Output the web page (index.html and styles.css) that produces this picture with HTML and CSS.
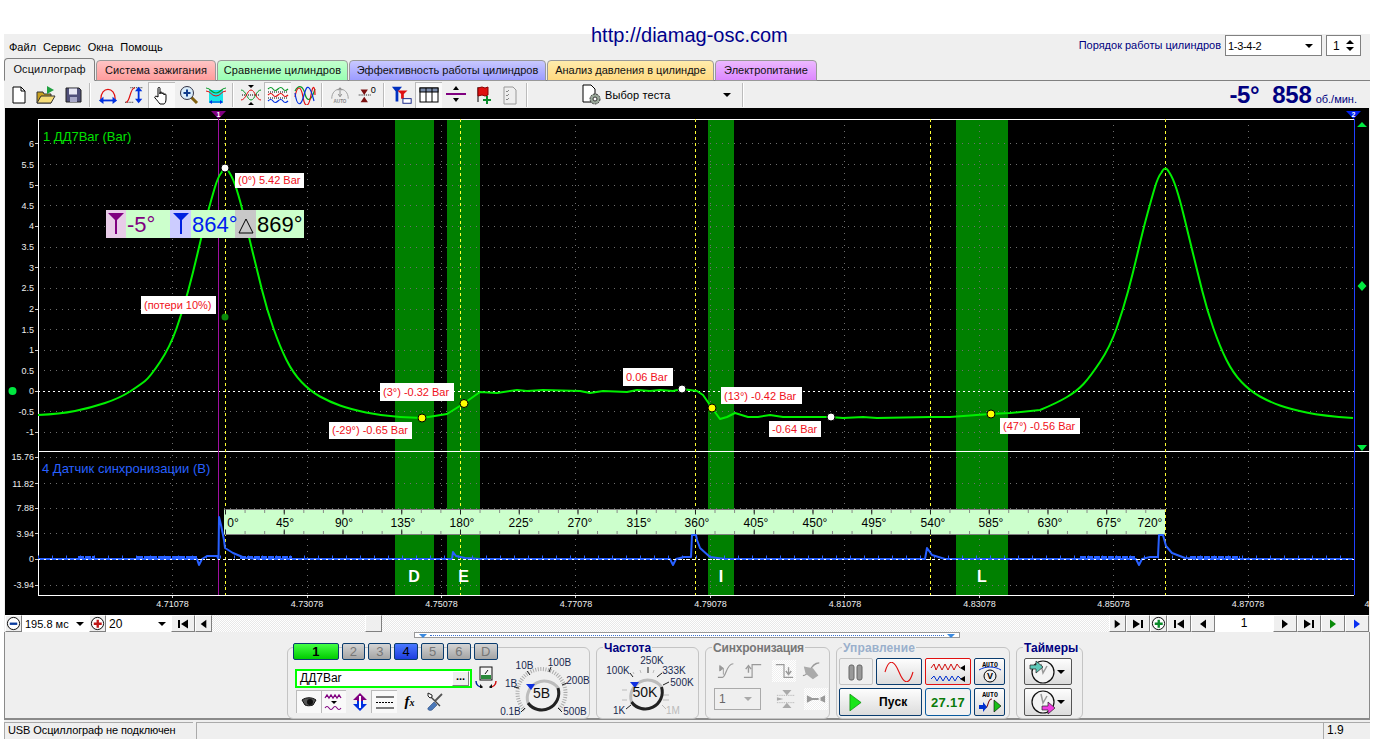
FILE: index.html
```html
<!DOCTYPE html>
<html lang="ru">
<head>
<meta charset="utf-8">
<title>Осциллограф</title>
<link rel="stylesheet" href="styles.css">
</head>
<body>
<svg class="defs" width="0" height="0" aria-hidden="true">
  <symbol id="first" viewBox="0 0 16 12"><path d="M3 2h2v8H3zM13 1.500v9L6 6z"/></symbol>
  <symbol id="prev" viewBox="0 0 16 12"><path d="M11 1.500v9L5 6z"/></symbol>
  <symbol id="next" viewBox="0 0 16 12"><path d="M5 1.500v9L11 6z"/></symbol>
  <symbol id="last" viewBox="0 0 16 12"><path d="M11 2h2v8h-2zM3 1.500v9L10 6z"/></symbol>
  <symbol id="minus" viewBox="0 0 16 16"><circle cx="8" cy="8" r="6.500" fill="#fff" stroke="#000"/><rect x="4" y="7" width="8" height="2.500" fill="#0a3c9e"/></symbol>
  <symbol id="plus" viewBox="0 0 16 16"><circle cx="8" cy="8" r="6.500" fill="#fff" stroke="#000"/><path d="M4 7h3V4h2.500v3h3v2.500h-3v3H7v-3H4z" fill="#c01818"/></symbol>
  <symbol id="plusg" viewBox="0 0 16 16"><circle cx="8" cy="8" r="6.500" fill="#fff" stroke="#000"/><path d="M4 7h3V4h2.500v3h3v2.500h-3v3H7v-3H4z" fill="#0a8a2a"/></symbol>
  <symbol id="clock" viewBox="0 0 26 26"><circle cx="13" cy="13" r="11" fill="#f4f4f4" stroke="#111" stroke-width="1.200"/><path d="M11 5l2 9 4-7" fill="none" stroke="#999" stroke-width="1.500"/></symbol>
</svg>

<div class="url">http://diamag-osc.com</div>

<div class="app">
  <div class="topbar">
    <nav class="menu"><span>Файл</span><span>Сервис</span><span>Окна</span><span>Помощь</span></nav>
    <div class="order">
      <span class="order-label">Порядок работы цилиндров</span>
      <div class="combo order-combo"><span>1-3-4-2</span><i class="caret"></i></div>
      <div class="combo spin"><span>1</span><b class="spin-arrows"><i class="up"></i><i class="caret"></i></b></div>
    </div>
  </div>

  <div class="tabs">
    <div class="tab active w1">Осциллограф</div>
    <div class="tab pink w2">Система зажигания</div>
    <div class="tab green w3">Сравнение цилиндров</div>
    <div class="tab blue w4">Эффективность работы цилиндров</div>
    <div class="tab yellow w5">Анализ давления в цилиндре</div>
    <div class="tab violet w6">Электропитание</div>
  </div>

  <div class="toolbar">
    <div class="tb"><svg class="ico" viewBox="0 0 20 20"><path d="M4 2h8l4 4v12H4z" fill="#fff" stroke="#000"/><path d="M12 2v4h4" fill="none" stroke="#000"/></svg></div>
    <div class="tb"><svg class="ico" viewBox="0 0 20 20"><path d="M1 7h6l1 2h7v9H1z" fill="#c8a020" stroke="#333"/><path d="M1 18l4-7h14l-4 7z" fill="#f6dc78" stroke="#333"/><path d="M11 1l7 4-7 4z" fill="#20a040"/></svg></div>
    <div class="tb"><svg class="ico" viewBox="0 0 20 20"><path d="M3 3h13l2 2v12H3z" fill="#50507a" stroke="#222"/><rect x="6" y="3.500" width="8" height="6" fill="#e8e8f4"/><rect x="7" y="12" width="7" height="5" fill="#a8a8c8"/></svg></div>
    <i class="sep"></i>
    <div class="tb"><svg class="ico" viewBox="0 0 22 20"><path d="M3 15C3 0 19 0 19 15" fill="none" stroke="#e01010" stroke-width="1.300"/><path d="M3 16h16" stroke="#0030e0" stroke-width="2"/><path d="M1 16l5-4v8zM21 16l-5-4v8z" fill="#0030e0"/></svg></div>
    <div class="tb"><svg class="ico" viewBox="0 0 22 20"><path d="M6 2h14M0 18h10" stroke="#000" stroke-dasharray="1 1"/><path d="M1 18C6 18 5 2 11 2" fill="none" stroke="#e01010" stroke-width="1.300"/><path d="M15 4v12" stroke="#0030e0" stroke-width="2"/><path d="M15 1l-4 5h8zM15 19l-4-5h8z" fill="#0030e0"/></svg></div>
    <div class="tb pressed"><svg class="ico" viewBox="0 0 20 20"><path d="M6 11V3.500c0-1.500 2-1.500 2 0V9V8c0-1.500 2-1.500 2 0v1c0-1.500 2-1.500 2 0v1c0-1.500 2-1.500 2 0v4c0 3-1 4.500-2 5H8c-1-1-3-4-5-6-1-1.500 1-2.500 3-1z" fill="#fff" stroke="#000"/></svg></div>
    <div class="tb"><svg class="ico" viewBox="0 0 20 20"><path d="M12 12l6 6" stroke="#806010" stroke-width="3"/><circle cx="8" cy="8" r="6.500" fill="#d8ecfa" stroke="#334"/><path d="M4.500 7h2.500V4.500h2V7h2.500v2H9v2.500H7V9H4.500z" fill="#103c8c"/></svg></div>
    <div class="tb"><svg class="ico wide" viewBox="0 0 22 20"><rect x="4" y="5" width="14" height="13" fill="#19e6e6"/><path d="M1 3c5 0 5 5 10 5s5-5 10-5" fill="none" stroke="#0a9a2a" stroke-width="1.200"/><path d="M1 6c5 0 5 5 10 5s5-5 10-5" fill="none" stroke="#e01010"/><path d="M6 17h10" stroke="#0030e0"/><path d="M4 17l3-2v4zM18 17l-3-2v4z" fill="#0030e0"/></svg></div>
    <i class="sep"></i>
    <div class="tb"><svg class="ico wide" viewBox="0 0 22 20"><path d="M2 10h18" stroke="#000" stroke-dasharray="1 1"/><path d="M1 5c5 0 6 10 10 10s5-10 10-10" fill="none" stroke="#0a9a2a"/><path d="M1 15c5 0 6-10 10-10s5 10 10 10" fill="none" stroke="#e01010"/><path d="M8 0h6l-3 3zM8 20h6l-3-3z"/></svg></div>
    <div class="tb pressed"><svg class="ico wide" viewBox="0 0 22 20"><path d="M1 4q3-3 5 0t5 0 5 0 5 0" fill="none" stroke="#0a9a2a" stroke-width="1.200"/><path d="M1 10q3-3 5 0t5 0 5 0 5 0" fill="none" stroke="#e01010" stroke-width="1.200"/><path d="M1 16q3-3 5 0t5 0 5 0 5 0" fill="none" stroke="#0030e0" stroke-width="1.200"/><path d="M1 7h20M1 13h20" stroke="#000" stroke-dasharray="1 1"/></svg></div>
    <div class="tb"><svg class="ico wide" viewBox="0 0 22 20"><path d="M1 6c4-7 8-5 10 3s6 8 10-5" fill="none" stroke="#0a9a2a" stroke-width="1.200"/><path d="M1 12c2-12 6-12 8 0s6 10 8-2 4-8 4 0" fill="none" stroke="#e01010" stroke-width="1.200"/><path d="M1 8c2 14 6 14 9 2s6-10 10 6" fill="none" stroke="#0030e0" stroke-width="1.200"/></svg></div>
    <i class="sep"></i>
    <div class="tb"><svg class="ico wide" viewBox="0 0 24 20"><path d="M3 14C3 0 21 0 21 14" fill="#eee" stroke="#999"/><path d="M12 3v8M10 5l2-3 2 3M10 9l2 3 2-3" fill="none" stroke="#888"/><text x="12" y="19" class="auto-tiny">AUTO</text></svg></div>
    <div class="tb"><svg class="ico wide" viewBox="0 0 24 20"><path d="M3 10h14" stroke="#000" stroke-dasharray="1 1"/><path d="M5 3h8l-4 6zM5 17h8l-4-6z" fill="#7a1010" transform="translate(0 1)"/><text x="16" y="8" class="zero">0</text></svg></div>
    <i class="sep"></i>
    <div class="tb"><svg class="ico wide" viewBox="0 0 24 20"><path d="M1 1h11L8 6v11H5V6z" fill="#0030c0"/><path d="M7 5h11l-4 4v5h-3V9z" fill="#e01010"/><rect x="13" y="14" width="9" height="5" fill="#fff" stroke="#0a1a80"/></svg></div>
    <div class="tb pressed"><svg class="ico wide" viewBox="0 0 22 20"><rect x="2" y="3" width="18" height="14" fill="#fff" stroke="#000"/><rect x="2" y="3" width="18" height="4" fill="#7a8aa8" stroke="#000"/><path d="M8 3v14M14 3v14" stroke="#000"/></svg></div>
    <div class="tb"><svg class="ico wide" viewBox="0 0 22 20"><path d="M1 9h20" stroke="#800080" stroke-width="2"/><path d="M8 5l3-4 3 4zM8 13l3 4 3-4z"/></svg></div>
    <div class="tb"><svg class="ico" viewBox="0 0 20 20"><path d="M5 2v15" stroke="#000"/><path d="M5 3l4-1 3 1 3-1v8l-3 1-3-1-4 1z" fill="#e01010" stroke="#800"/><path d="M10 14h3v-3h2v3h3v2h-3v3h-2v-3h-3z" fill="#0a8a2a"/></svg></div>
    <div class="tb"><svg class="ico" viewBox="0 0 20 20"><path d="M4 2h9l3 3v14H4z" fill="#eee" stroke="#999"/><path d="M6 6l1 1 2-2M6 10l1 1 2-2M6 14l1 1 2-2" fill="none" stroke="#888"/></svg></div>
    <i class="sep"></i>
    <div class="test-select">
      <svg class="ico doc" viewBox="0 0 22 22"><path d="M2 1h8l4 4v13H2z" fill="#fff" stroke="#000"/><circle cx="14" cy="15" r="5" fill="#9aa89a" stroke="#333" stroke-dasharray="2 1"/><circle cx="14" cy="15" r="2" fill="#fff" stroke="#333"/></svg>
      <span>Выбор теста</span>
      <i class="caret"></i>
    </div>
    <i class="sep"></i>
    <div class="readout"><b class="big">-5°</b><b class="big rpm">858</b><span class="unit">об./мин.</span></div>
  </div>

  <svg class="scope" viewBox="5 108 1364 507" width="1364" height="507">
    <rect class="s-band" x="395" y="119" width="39" height="476"/>
    <rect class="s-band" x="447" y="119" width="33" height="476"/>
    <rect class="s-band" x="708" y="119" width="26" height="476"/>
    <rect class="s-band" x="956" y="119" width="52" height="476"/>

    <path class="s-grid" d="M38 143.500H1354M38 164.500H1354M38 185.500H1354M38 205.500H1354M38 226.500H1354M38 247.500H1354M38 267.500H1354M38 288.500H1354M38 309.500H1354M38 329.500H1354M38 350.500H1354M38 370.500H1354M38 411.500H1354M38 432.500H1354M38 457.500H1354M38 483.500H1354M38 508.500H1354M38 533.500H1354M38 585.500H1354"/>
    <path class="s-grid" d="M172.500 119V595M307.500 119V595M441.500 119V595M575.500 119V595M710.500 119V595M844.500 119V595M979.500 119V595M1113.500 119V595M1248.500 119V595"/>
    <path class="s-zero" d="M38 391.500H1354M38 559.500H1354"/>
    <path class="s-frame" d="M38.500 595.500V119.500H1354M38 451.500H1369M38 595.500H1354"/>
    <path class="s-tick" d="M35 143.500h3M35 185.500h3M35 226.500h3M35 267.500h3M35 309.500h3M35 350.500h3M35 391.500h3M35 432.500h3M35 457.500h3M35 483.500h3M35 508.500h3M35 533.500h3M35 559.500h3M35 585.500h3M172.500 596v2M307.500 596v2M441.500 596v2M575.500 596v2M710.500 596v2M844.500 596v2M979.500 596v2M1113.500 596v2M1248.500 596v2"/>

    <path class="s-yellow" d="M225.500 119V595M460.500 119V595M695.500 119V595M930.500 119V595M1165.500 119V595"/>
    <path class="s-purple" d="M218.500 119V595"/>
    <path class="s-blueline" d="M1354.500 119V595"/>
    <path class="s-m-purple" d="M211 111h15l-7.500 8z"/>
    <path class="s-m-blue" d="M1346 111h15l-7.500 8z"/>
    <text x="218.500" y="117" class="s-mtext">1</text>
    <text x="1353.500" y="117" class="s-mtext">2</text>

    <path class="s-ruler" d="M224 509H1165V535H224z"/>
    <path class="s-ruler-edge" d="M224 509.500H1165M224 534.500H1165"/>
    <path class="s-rt-minor" d="M225 511.500H1165M225 532.500H1165"/>
    <path class="s-rt-major" d="M225 512H1165M225 532H1165"/>
    <g class="s-rtext">
      <text x="233" y="527">0°</text><text x="285" y="527">45°</text><text x="344" y="527">90°</text><text x="403" y="527">135°</text><text x="462" y="527">180°</text><text x="521" y="527">225°</text><text x="580" y="527">270°</text><text x="639" y="527">315°</text><text x="697" y="527">360°</text><text x="756" y="527">405°</text><text x="815" y="527">450°</text><text x="874" y="527">495°</text><text x="933" y="527">540°</text><text x="991" y="527">585°</text><text x="1050" y="527">630°</text><text x="1109" y="527">675°</text><text x="1150" y="527">720°</text>
    </g>

    <path class="s-trace" d="M38 415Q60 414 75 411Q90 408 105 403Q120 398 130 391.500Q140 385 145 381Q150 377 160 362Q170 347 176.500 328.500Q183 310 188 291.500Q193 273 198 251.500Q203 230 207.500 213.500Q212 197 215 187Q218 177 221.500 172.500Q225 165 229 172Q233 178 236.500 189Q240 200 244 216.500Q248 233 252.500 251.500Q257 270 262 290Q267 310 273.500 328.500Q280 347 286.500 360Q293 373 301.500 382Q310 391 320 396.500Q330 402 340 405.500Q350 409 366 412.500Q383 416 400 417L422 418L447 414L463 404L480 392L497 393L517 390L527 391L543 390L580 391L590 393L603 391L627 392L637 390L650 391L660 390L673 391L682 389L697 391L703 395L712 408L720 419L727 417L735 413L748 417L758 417L770 415L783 417L810 417L830 417L843 418L863 417L877 418L930 417L950 417L990 414L1010 413L1040 410Q1057 403 1067 397Q1077 391 1083.500 384Q1090 377 1100 362Q1110 347 1116.500 328.500Q1123 310 1128 291.500Q1133 273 1138 251.500Q1143 230 1147.500 213.500Q1152 197 1155 187Q1158 177 1161.500 172.500Q1165 165 1169 172Q1173 178 1176.500 189Q1180 200 1184 216.500Q1188 233 1192.500 251.500Q1197 270 1202 290Q1207 310 1213.500 328.500Q1220 347 1226.500 360Q1233 373 1241.500 382Q1250 391 1260 396.500Q1270 402 1280 405.500Q1290 409 1306.500 412.500Q1323 416 1353 418"/>

    <path class="s-noise" d="M38 557H1354"/>
    <path class="s-noise-thick" d="M137 557.500H197M240 557.500H292M78 557.500H95M1080 557.500H1136M1190 557.500H1240"/>
    <polyline class="s-blue" points="38,559 197,559 199,565 202,559 207,556 217,556 218.500,559 219,517 221,525 224,540 225,548 233,553 245,558 260,559 452,559 453,552 456,556 465,558 480,559 670,559 673,565 676,559 684,557 691,557 692,535 696,535 697,540 700,548 710,557 725,559 925,559 927,548 932,555 945,559 1136,559 1139,565 1142,559 1150,557 1158,557 1159,535 1163,535 1166,546 1172,553 1185,558 1200,559 1353,559"/>
    <path class="s-zero2" d="M38 559.500H1354"/>

    <g class="s-ylabels">
      <text x="34" y="147">6</text><text x="34" y="188">5</text><text x="34" y="168">5.5</text><text x="34" y="209">4.5</text><text x="34" y="229">4</text><text x="34" y="250">3.5</text><text x="34" y="271">3</text><text x="34" y="291">2.5</text><text x="34" y="312">2</text><text x="34" y="333">1.5</text><text x="34" y="353">1</text><text x="34" y="374">0.5</text><text x="34" y="394">0</text><text x="34" y="415">-0.5</text><text x="34" y="435">-1</text>
      <text x="34" y="460">15.76</text><text x="34" y="487">11.82</text><text x="34" y="511">7.88</text><text x="34" y="537">3.94</text><text x="34" y="562">0</text><text x="34" y="588">-3.94</text>
    </g>
    <g class="s-xlabels">
      <text x="172.500" y="607">4.71078</text><text x="307" y="607">4.73078</text><text x="441.500" y="607">4.75078</text><text x="576" y="607">4.77078</text><text x="710.500" y="607">4.79078</text><text x="845" y="607">4.81078</text><text x="979.500" y="607">4.83078</text><text x="1113.500" y="607">4.85078</text><text x="1248" y="607">4.87078</text><text x="1367" y="607">4</text>
    </g>

    <text x="43" y="141" class="s-ch1">1 ДД7Bar (Bar)</text>
    <text x="42" y="473" class="s-ch4">4 Датчик синхронизации (В)</text>

    <g class="s-letters"><text x="414" y="582">D</text><text x="463.500" y="582">E</text><text x="721" y="582">I</text><text x="982" y="582">L</text></g>

    <rect class="s-lb" x="235" y="173" width="69" height="15"/><text class="s-lt" x="238" y="184">(0°) 5.42 Bar</text>
    <rect class="s-lb" x="141" y="296" width="75" height="18"/><text class="s-lt" x="144" y="309">(потери 10%)</text>
    <rect class="s-lb" x="380" y="383" width="74" height="18"/><text class="s-lt" x="383" y="396">(3°) -0.32 Bar</text>
    <rect class="s-lb" x="329" y="422" width="83" height="17"/><text class="s-lt" x="332" y="434">(-29°) -0.65 Bar</text>
    <rect class="s-lb" x="623" y="368" width="50" height="18"/><text class="s-lt" x="626" y="381">0.06 Bar</text>
    <rect class="s-lb" x="721" y="387" width="81" height="17"/><text class="s-lt" x="724" y="400">(13°) -0.42 Bar</text>
    <rect class="s-lb" x="769" y="421" width="52" height="16"/><text class="s-lt" x="772" y="433">-0.64 Bar</text>
    <rect class="s-lb" x="1000" y="418" width="80" height="16"/><text class="s-lt" x="1003" y="430">(47°) -0.56 Bar</text>

    <circle class="s-dw" cx="225" cy="168" r="4"/>
    <circle class="s-dg" cx="225" cy="317" r="3.500"/>
    <circle class="s-dy" cx="422" cy="418" r="4"/>
    <circle class="s-dy" cx="464" cy="403.500" r="4"/>
    <circle class="s-dy" cx="712" cy="408" r="4"/>
    <circle class="s-dy" cx="991" cy="414" r="4"/>
    <circle class="s-dw" cx="682" cy="389" r="4"/>
    <circle class="s-dw" cx="831" cy="417" r="4"/>

    <circle class="s-lime" cx="12.500" cy="391" r="4"/>
    <path class="s-lime" d="M1357 127l5-5 5 5zM1362 281l4.500 5-4.500 5-4.500-5zM1357 445h10l-5 6z"/>

    <rect class="s-box" x="106" y="210" width="198" height="28"/>
    <rect class="s-box-p" x="106" y="210" width="20" height="28"/>
    <rect class="s-box-b" x="170" y="210" width="21" height="28"/>
    <rect class="s-box-g" x="235" y="210" width="21" height="28"/>
    <path class="s-fil-p" d="M108 213h16l-7 7v14h-2v-14z"/>
    <path class="s-fil-b" d="M173 213h16l-7 7v14h-2v-14z"/>
    <path class="s-delta" d="M246 219l7 14h-14z"/>
    <text class="s-m s-m1" x="127" y="232">-5°</text>
    <text class="s-m s-m2" x="192" y="232">864°</text>
    <text class="s-m s-m3" x="257" y="232">869°</text>
  </svg>

  <div class="scrollrow">
    <div class="zbtn"><svg class="nav-ico" viewBox="0 0 16 16"><use href="#minus"/></svg></div>
    <div class="sel sel1"><span>195.8 мс</span><i class="caret"></i></div>
    <div class="zbtn"><svg class="nav-ico" viewBox="0 0 16 16"><use href="#plus"/></svg></div>
    <div class="sel sel2"><span>20</span><i class="caret"></i></div>
    <div class="nbtn"><svg class="nav-tri" viewBox="0 0 16 12"><use href="#first"/></svg></div>
    <div class="nbtn n-s"><svg class="nav-tri" viewBox="0 0 16 12"><use href="#prev"/></svg></div>
    <div class="track"><div class="thumb"></div></div>
    <div class="nbtn n-s"><svg class="nav-tri" viewBox="0 0 16 12"><use href="#next"/></svg></div>
    <div class="nbtn"><svg class="nav-tri" viewBox="0 0 16 12"><use href="#last"/></svg></div>
    <div class="zbtn"><svg class="nav-ico" viewBox="0 0 16 16"><use href="#plusg"/></svg></div>
    <div class="nbtn"><svg class="nav-tri" viewBox="0 0 16 12"><use href="#first"/></svg></div>
    <div class="nbtn"><svg class="nav-tri" viewBox="0 0 16 12"><use href="#prev"/></svg></div>
    <div class="pageno">1</div>
    <div class="nbtn"><svg class="nav-tri" viewBox="0 0 16 12"><use href="#next"/></svg></div>
    <div class="nbtn"><svg class="nav-tri" viewBox="0 0 16 12"><use href="#last"/></svg></div>
    <div class="nbtn c-green"><svg class="nav-tri" viewBox="0 0 16 12"><use href="#next"/></svg></div>
    <div class="nbtn c-blue"><svg class="nav-tri" viewBox="0 0 16 12"><use href="#next"/></svg></div>
  </div>

  <div class="bottom">
    <div class="slim"><i class="slim-tri"></i><i class="slim-dots"></i><i class="slim-tri"></i></div>
    <div class="groups">
      <section class="group g-channel">
        <div class="ch-left">
          <div class="chan-row">
            <span class="chan c-on w-first">1</span><span class="chan">2</span><span class="chan">3</span><span class="chan c-4">4</span><span class="chan">5</span><span class="chan">6</span><span class="chan c-d">D</span>
          </div>
          <div class="name-row">
            <div class="name-input"><span>ДД7Bar</span><b class="dots">...</b></div>
            <svg class="ico probe" viewBox="0 0 22 22"><rect x="5" y="1" width="12" height="13" fill="#f4f4f4" stroke="#111"/><rect x="6" y="9" width="10" height="4" fill="#2a8a3a"/><path d="M10 8l3-4" stroke="#111"/><path d="M1 15c0 4 3 6 6 6" fill="none" stroke="#0020a0" stroke-width="1.500"/><path d="M21 15c0 4-3 6-6 6" fill="none" stroke="#d01010" stroke-width="1.500"/><path d="M5 18v6l3-3zM17 18v6l-3-3z" fill="#111"/></svg>
          </div>
          <div class="chicons">
            <div class="ci pressed"><svg class="ico" viewBox="0 0 20 20"><path d="M3 8c4-3 10-3 14 0l-3 5c-3 1-6 1-8 0z" fill="#555" stroke="#111"/><circle cx="11" cy="10" r="3" fill="#111"/></svg></div>
            <div class="ci pressed"><svg class="ico" viewBox="0 0 20 20"><path d="M1 6l2-3 2 3 2-3 2 3 2-3 2 3 2-3 2 3" fill="none" stroke="#800080" stroke-width="1.300"/><path d="M7 9h6l-3 3z"/><path d="M1 16q2-3 4 0t4 0 4 0 4 0" fill="none" stroke="#800080" stroke-width="1.100"/></svg></div>
            <div class="ci c-narrow"><svg class="ico" viewBox="0 0 20 20"><path d="M10 1l7 7h-4v3H7V8H3z" fill="#800080"/><path d="M10 19l7-7h-4V9H7v3H3z" fill="#0030e0"/><path d="M9 4h2v12H9z" fill="#fff"/></svg></div>
            <div class="ci pressed c-lines"><svg class="ico" viewBox="0 0 20 20"><path d="M1 5h18M1 16h18" stroke="#000"/><path d="M1 10.500h18" stroke="#000" stroke-dasharray="2 1"/></svg></div>
            <div class="ci c-fx"><span class="fx">f<small>x</small></span></div>
            <div class="ci"><svg class="ico" viewBox="0 0 20 20"><path d="M4 2l2 3 9 9" fill="none" stroke="#444" stroke-width="1.400"/><path d="M3 1v3l2 2 2-1V3z" fill="#fff" stroke="#222"/><path d="M17 2l-7 7" stroke="#555" stroke-width="1.800"/><path d="M3 16l6-6 3 3-5 5c-2 1-5 0-4-2z" fill="#4a78b8" stroke="#2a4a80" stroke-width=".6"/></svg></div>
          </div>
        </div>
        <svg class="knob" viewBox="498 647 92 72" width="92" height="72">
          <path class="k-hatch" d="M524.500 710A24 24 0 1 1 558.500 710"/>
          <path class="k-tick" d="M519 688l-5-1M530 675l-3-4M549 672l2-5M562 685l5-2M558 708l4 4M525 708l-4 4"/>
          <circle class="k-face" cx="541.500" cy="693" r="17"/>
          <path class="k-light" d="M528 703A17 17 0 0 1 558 688"/>
          <path class="k-dark" d="M558 688A17 17 0 0 1 528 703"/>
          <path class="k-mark" d="M526 684h9l-4 6z"/>
          <text class="k-val" x="541.500" y="698">5В</text>
          <g class="k-lab"><text x="524.500" y="669">10В</text><text x="559.500" y="666">100В</text><text x="578" y="684">200В</text><text x="511" y="687">1В</text><text x="510.500" y="715">0.1В</text><text x="575" y="715">500В</text></g>
        </svg>
      </section>

      <section class="group g-freq">
        <h3 class="group-title t-navy">Частота</h3>
        <svg class="knob knob-f" viewBox="596 647 103 72" width="103" height="72">
          <path class="k-tick" d="M630 673l3 4M648 667v6M657 677l5-4M663 685l6-3M626 709l5-4"/>
          <path class="k-tickl" d="M662 705l4 4M622 690h5M622 700h5M663 695h6M663 700h6M633 672l1 2M640 670l1 3M654 670l-1 3"/>
          <circle class="k-face" cx="645" cy="692" r="17"/>
          <path class="k-light" d="M631.500 702A17 17 0 0 1 661.500 687"/>
          <path class="k-dark" d="M661.500 687A17 17 0 0 1 631.500 702"/>
          <path class="k-mark" d="M630 682h9l-4 6z"/>
          <text class="k-val" x="645" y="697">50K</text>
          <g class="k-lab"><text x="618" y="674">100K</text><text x="652" y="664">250K</text><text x="674" y="674">333K</text><text x="682" y="686">500K</text><text x="619" y="714">1K</text><text class="k-off" x="673" y="714">1M</text></g>
        </svg>
      </section>

      <section class="group g-sync">
        <h3 class="group-title t-gray">Синхронизация</h3>
        <div class="sync-row sr1">
          <svg class="ico dis" viewBox="0 0 22 22"><path d="M1 18h5c4 0 4-15 12-15" fill="none" stroke="#999" stroke-width="1.300"/><path d="M3 5l4 3-4 3z M7 8v7" fill="#999" stroke="#999"/></svg>
          <svg class="ico dis" viewBox="0 0 22 22"><path d="M1 18h9V4h10" fill="none" stroke="#999" stroke-width="1.300"/><path d="M6 13V7M3 9l3-4 3 4" fill="none" stroke="#999" stroke-width="1.500"/></svg>
          <span class="dis-box"><svg class="ico dis" viewBox="0 0 22 22"><path d="M2 4h9v14h10" fill="none" stroke="#999" stroke-width="1.300"/><path d="M16 7v7M13 11l3 4 3-4" fill="none" stroke="#999" stroke-width="1.500"/></svg></span>
          <svg class="ico dis" viewBox="0 0 22 22"><path d="M1 16c8 0 8-14 18-14" fill="none" stroke="#999" stroke-width="1.300"/><path d="M2 6l10 2 6 8-6 4-8-6z" fill="#aaa"/></svg>
        </div>
        <div class="sync-row sr2">
          <div class="combo sync-combo"><span>1</span><i class="caret c-dis"></i></div>
          <svg class="ico dis s2a" viewBox="0 0 22 22"><path d="M1 7h20M1 15h20" stroke="#aaa" stroke-dasharray="1 1"/><path d="M7 1h10l-5 6zM7 21h10l-5-6z" fill="#aaa"/><path d="M1 9l7 2-7 2z" fill="#aaa"/></svg>
          <span class="dis-box"><svg class="ico dis" viewBox="0 0 22 22"><path d="M1 7l8 4-8 4zM21 7l-8 4 8 4zM6 10h10v2H6z" fill="#999"/></svg></span>
        </div>
      </section>

      <section class="group g-ctl">
        <h3 class="group-title t-pale">Управление</h3>
        <div class="ctl-grid">
          <div class="cb cb-off"><svg class="ico" viewBox="0 0 20 20"><rect x="3" y="3" width="5" height="15" rx="2" fill="#999" stroke="#666"/><rect x="11" y="3" width="5" height="15" rx="2" fill="#999" stroke="#666"/></svg></div>
          <div class="cb"><svg class="cico" viewBox="0 0 30 20"><path d="M1 10C5-4 10-2 15 10s10 14 14 0" fill="none" stroke="#e01010" stroke-width="1.100"/></svg></div>
          <div class="cb cb-red"><svg class="cico" viewBox="0 0 36 22"><path d="M1 7l3-4 2 6 3-6 3 6 3-6 3 6 3-6 3 6 3-6 3 4" fill="none" stroke="#d01010"/><path d="M1 18l3-3 3 5 3-5 3 5 3-5 3 5 3-5 3 5 3-5 3 3" fill="none" stroke="#0030d0"/><path d="M30 7l5-3v6zM30 18l5-3v6z"/></svg></div>
          <div class="cb"><svg class="cico auto" viewBox="0 0 24 24"><text x="12" y="7" class="auto-t">AUTO</text><path d="M1 10c6-4 16-4 22 0" fill="none" stroke="#0030d0"/><circle cx="12" cy="16" r="6" fill="#eee" stroke="#000"/><text x="12" y="19" class="auto-v">V</text></svg></div>
          <div class="cb cb-run"><svg class="run-tri" viewBox="0 0 14 20"><path d="M1 1l12 9-12 9z" fill="#19e619" stroke="#0a8a0a" stroke-width=".8"/></svg><b>Пуск</b></div>
          <div class="cb cb-time"><b>27.17</b></div>
          <div class="cb"><svg class="cico auto" viewBox="0 0 24 24"><text x="12" y="7" class="auto-t">AUTO</text><path d="M3 18h4c4 0 2-9 7-9" fill="none" stroke="#7a1010" stroke-width="1.100"/><path d="M1 15h4l0-3 4 5-4 5v-3H1z" fill="#0030d0"/><path d="M16 10l7 6-7 6z" fill="#19c019" stroke="#000" stroke-width=".6"/></svg></div>
        </div>
      </section>

      <section class="group g-tim">
        <h3 class="group-title t-navy">Таймеры</h3>
        <div class="tim-col">
          <div class="cb cb-tim"><svg class="tim-ico" viewBox="0 0 26 26"><use href="#clock"/><path d="M0 6h6V2l7 6-7 6v-4H0z" fill="#5ec8b8" stroke="#222" stroke-width=".7"/></svg><i class="caret"></i></div>
          <div class="cb cb-tim"><svg class="tim-ico" viewBox="0 0 26 26"><use href="#clock"/><path d="M12 17h6v-4l7 6-7 6v-4h-6z" fill="#f03ce0" stroke="#222" stroke-width=".7"/></svg><i class="caret"></i></div>
        </div>
      </section>
    </div>
  </div>

  <footer class="status">
    <div class="st st1">USB Осциллограф не подключен</div>
    <div class="st st2"></div>
    <div class="st st3">1.9</div>
  </footer>
</div>
</body>
</html>
```
FILE: styles.css
```css
* { box-sizing: border-box; }
html, body { margin: 0; padding: 0; background: #fff; height: 744px; overflow: hidden; }
body { font: 11px "Liberation Sans", Arial, sans-serif; color: #000; position: relative; }
.defs { position: absolute; }
i { display: block; font-style: normal; }

.url { position: absolute; left: 591px; top: 24px; font-size: 20px; line-height: 23px; color: #00008c; z-index: 2; }

.app { margin: 34px 0 0 4px; width: 1366px; background: #efefef; }

.topbar { height: 24px; display: flex; justify-content: space-between; }
.menu { display: flex; gap: 7px; padding: 7px 0 0 5px; line-height: 13px; }
.order { display: flex; align-items: flex-start; padding: 1px 9px 0 0; }
.order-label { color: #000080; line-height: 21px; margin-right: 4px; }
.combo { background: #efefef; border: 1px solid #808080; height: 21px; display: flex; align-items: center; padding: 0 4px; }
.order-combo { width: 97px; justify-content: space-between; background: #fff; padding: 0 8px 0 2px; letter-spacing: -.3px; }
.spin { width: 35px; margin-left: 4px; justify-content: space-between; font-size: 12px; padding-left: 6px; background: #fff; }
.spin-arrows { display: flex; flex-direction: column; gap: 3px; margin-right: 2px; }
.caret { width: 0; height: 0; border: 4px solid transparent; border-top: 4px solid #000; border-bottom: 0; }
.up { width: 0; height: 0; border: 4px solid transparent; border-bottom: 4px solid #000; border-top: 0; }

.tabs { height: 23px; display: flex; align-items: flex-end; gap: 1px; border-bottom: 1px solid #808080; }
.tab { height: 21px; margin-bottom: -1px; border: 1px solid #999; border-radius: 4px 4px 0 0; text-align: center; line-height: 19px; color: #111; letter-spacing: .12px; }
.active { height: 23px; background: #efefef; border-color: #808080; border-bottom-color: #efefef; line-height: 21px; }
.w1 { width: 91px; } .w2 { width: 120px; } .w3 { width: 131px; }
.w4 { width: 197px; letter-spacing: 0; } .w5 { width: 167px; letter-spacing: 0; } .w6 { width: 102px; letter-spacing: 0; }
.pink { background: linear-gradient(#ffc4c4, #ff9c9c); }
.green { background: linear-gradient(#c4ffce, #99ffb3); }
.blue { background: linear-gradient(#c8c8ff, #9c9cff); }
.yellow { background: linear-gradient(#ffecac, #ffd980); }
.violet { background: linear-gradient(#ecb8ff, #dd88ff); }

.toolbar { height: 27px; display: flex; align-items: center; padding-left: 1px; }
.tb { width: 27px; height: 26px; display: flex; align-items: center; justify-content: center; flex: none; }
.pressed { background: #f9f9f9; border-left: 1px solid #bbb; border-top: 1px solid #bbb; }
.ico { width: 20px; height: 20px; display: block; flex: none; }
.ico.wide { width: 22px; }
.sep { width: 2px; height: 24px; margin: 0 3px; background: #bbb; border-right: 1px solid #fff; flex: none; }
.auto-tiny { font-size: 5px; fill: #888; text-anchor: middle; font-weight: bold; }
.zero { font-size: 10px; fill: #000; }
.test-select { width: 208px; flex: none; display: flex; align-items: center; padding-left: 50px; font-size: 11px; letter-spacing: .1px; }
.test-select .doc { width: 22px; height: 22px; margin-right: 2px; }
.test-select .caret { margin-left: 52px; }
.readout { margin-left: auto; display: flex; align-items: baseline; padding-right: 13px; color: #000080; }
.big { font-size: 24px; line-height: 26px; letter-spacing: -.4px; }
.rpm { margin-left: 13px; letter-spacing: -.2px; }
.unit { font-size: 11px; margin-left: 4px; }

.scope { display: block; margin-left: 1px; background: #000; }
.s-band { fill: #008000; }
.s-grid { stroke: #6e6e6e; stroke-dasharray: 1 5; fill: none; shape-rendering: crispEdges; }
.s-zero { stroke: #fff; stroke-dasharray: 2 3; fill: none; shape-rendering: crispEdges; }
.s-zero2 { stroke: #fff; stroke-dasharray: 2 4; fill: none; shape-rendering: crispEdges; }
.s-frame { stroke: #fff; fill: none; shape-rendering: crispEdges; }
.s-tick { stroke: #ccc; fill: none; shape-rendering: crispEdges; }
.s-yellow { stroke: #ffff33; stroke-dasharray: 3 3; fill: none; shape-rendering: crispEdges; }
.s-purple { stroke: #a010a0; shape-rendering: crispEdges; }
.s-blueline { stroke: #2040ff; shape-rendering: crispEdges; }
.s-m-purple { fill: #800080; }
.s-m-blue { fill: #0020f0; }
.s-mtext { fill: #fff; font-size: 7px; font-weight: bold; text-anchor: middle; }
.s-ruler { fill: #ccffcc; }
.s-ruler-edge { stroke: #808080; fill: none; shape-rendering: crispEdges; }
.s-rt-minor { stroke: #888; stroke-width: 3; stroke-dasharray: 1 18.58; fill: none; }
.s-rt-major { stroke: #222; stroke-width: 5; stroke-dasharray: 1 57.75; fill: none; }
.s-rtext text { font-size: 12px; fill: #000; text-anchor: middle; }
.s-trace { fill: none; stroke: #00f000; stroke-width: 2; stroke-linejoin: round; }
.s-blue { fill: none; stroke: #2860ff; stroke-width: 2; stroke-linejoin: round; }
.s-noise { fill: none; stroke: #2860ff; stroke-width: 3; stroke-dasharray: 1 13; }
.s-noise-thick { fill: none; stroke: #2860ff; stroke-width: 3; stroke-dasharray: 6 1; }
.s-ylabels text { font-size: 9px; fill: #eee; text-anchor: end; }
.s-xlabels text { font-size: 9px; fill: #eee; text-anchor: middle; }
.s-ch1 { font-size: 13px; fill: #00e000; }
.s-ch4 { font-size: 13px; fill: #2860ff; }
.s-letters text { font-size: 16px; font-weight: bold; fill: #fff; text-anchor: middle; }
.s-lb { fill: #fff; }
.s-lt { font-size: 11px; fill: #f01020; }
.s-dw { fill: #fff; stroke: #000; }
.s-dg { fill: #0a8a0a; }
.s-dy { fill: #ffff00; stroke: #000; }
.s-lime { fill: #00e840; }
.s-box { fill: #ccffcc; }
.s-box-p { fill: #e8cce8; }
.s-box-b { fill: #ccccff; }
.s-box-g { fill: #c8c8c8; }
.s-fil-p { fill: #800080; }
.s-fil-b { fill: #0020e0; }
.s-delta { fill: none; stroke: #000; }
.s-m { font-size: 22px; }
.s-m1 { fill: #800080; }
.s-m2 { fill: #0020f0; }
.s-m3 { fill: #000; }

.scrollrow { height: 17px; display: flex; margin-left: 1px; width: 1364px; background: #fff; }
.zbtn { width: 17px; flex: none; background: #efefef; border: 1px solid; border-color: #fff #808080 #808080 #fff; display: flex; align-items: center; justify-content: center; }
.nav-ico { width: 15px; height: 15px; display: block; }
.sel { display: flex; align-items: center; justify-content: space-between; font-size: 11px; padding: 0 5px 0 3px; flex: none; }
.sel1 { width: 67px; }
.sel2 { width: 65px; font-size: 12px; }
.nbtn { width: 24px; flex: none; background: #efefef; border: 1px solid; border-color: #fff #808080 #808080 #fff; display: flex; align-items: center; justify-content: center; }
.n-s { width: 17px; }
.nav-tri { width: 16px; height: 12px; display: block; fill: #000; }
.c-green .nav-tri { fill: #0a8a0a; }
.c-blue .nav-tri { fill: #0a30f0; }
.track { flex: 1; background: repeating-conic-gradient(#fff 0 25%, #e8e8e8 0 50%) 0 0 / 2px 2px; padding-left: 153px; }
.thumb { width: 17px; height: 17px; background: #efefef; border: 1px solid; border-color: #fff #808080 #808080 #fff; }
.pageno { width: 58px; flex: none; text-align: center; font-size: 12px; line-height: 16px; }

.bottom { height: 88px; border: 1px solid #8a8a8a; border-width: 0 1px 2px; }
.slim { margin-left: 409px; width: 546px; height: 6px; border: 1px solid #999; background: #fff; display: flex; align-items: center; justify-content: space-between; padding: 0 4px; }
.slim-tri { width: 0; height: 0; border: 4px solid transparent; border-top: 4px solid #3a8ae0; border-bottom: 0; margin-top: 1px; }
.slim-dots { flex: 1; height: 1px; margin: 0 3px; border-top: 1px dotted #3a70d0; }
.groups { display: flex; gap: 6px; padding-left: 282px; margin-top: 9px; }
.group { height: 72px; border: 1px solid #c4c4c4; border-radius: 6px; position: relative; flex: none; }
.group-title { position: absolute; top: -7px; left: 6px; margin: 0; padding: 0 1px; background: #efefef; font-size: 12px; line-height: 14px; font-weight: bold; letter-spacing: 0; }
.t-navy { color: #000080; }
.t-gray { color: #777; left: 6px; letter-spacing: -.2px; }
.t-pale { color: #9ab0cc; left: 5px; letter-spacing: .1px; }

.g-channel { width: 303px; display: flex; }
.ch-left { width: 210px; padding-left: 5px; flex: none; }
.knob { display: block; position: relative; top: -1px; overflow: visible; }
.knob-f { left: -1px; }
.chan-row { display: flex; gap: 3px; margin-top: -5px; }
.chan { width: 24px; height: 17px; border: 1px solid #0a3c6e; border-radius: 2px; background: linear-gradient(#d4d4d4, #a4a4a4); color: #777; text-align: center; font-size: 13px; line-height: 15px; }
.w-first { width: 47px; }
.c-on { background: linear-gradient(#44ff44, #00cc00); color: #000; font-weight: bold; }
.c-4 { background: linear-gradient(#4a78ff, #1e3ee0); color: #000; }
.c-d { width: 25px; }
.name-row { display: flex; margin: 8px 0 0 2px; align-items: center; }
.name-input { width: 177px; height: 19px; border: 1px solid #00ff00; box-shadow: inset 0 0 0 1px #00ff00; background: #fff; display: flex; justify-content: space-between; align-items: center; padding: 0 2px 0 4px; font-size: 12px; }
.dots { width: 17px; height: 15px; background: #efefef; border: 1px solid; border-color: #fff #808080 #808080 #fff; text-align: center; line-height: 9px; font-size: 11px; }
.probe { width: 22px; height: 22px; margin-left: 3px; margin-top: -2px; }
.chicons { display: flex; margin: 2px 0 0 3px; }
.ci { width: 25px; height: 23px; display: flex; align-items: center; justify-content: center; flex: none; }
.c-narrow { margin-left: 3px; width: 22px; }
.c-lines { width: 26px; }
.fx { font: italic bold 15px "Liberation Serif", serif; }
.fx small { font-size: 10px; }

.g-freq { width: 103px; }
.k-hatch { fill: none; stroke: #aaa; stroke-width: 4; stroke-dasharray: 1 1.500; }
.k-tick { stroke: #222; fill: none; }
.k-tickl { stroke: #bbb; fill: none; }
.k-face { fill: #efefef; }
.k-light { fill: none; stroke: #bcbcbc; stroke-width: 3; }
.k-dark { fill: none; stroke: #222; stroke-width: 3; }
.k-mark { fill: #1030e0; }
.k-val { font-size: 14px; text-anchor: middle; fill: #111; }
.k-lab text { font-size: 10px; text-anchor: middle; fill: #1a2a50; }
.k-lab .k-off { fill: #bbb; }

.g-sync { width: 125px; padding: 10px 0 0 8px; }
.sync-row { display: flex; align-items: center; }
.sr1 { gap: 6px; height: 25px; padding-left: 3px; }
.sr2 { margin-top: 4px; height: 24px; }
.dis-box { width: 24px; height: 22px; display: flex; align-items: center; justify-content: center; background: repeating-conic-gradient(#fff 0 25%, #efefef 0 50%) 0 0 / 2px 2px; margin-left: 3px; }
.sync-combo { width: 47px; height: 22px; justify-content: space-between; border-color: #aaa; padding: 0 8px 0 4px; font-size: 12px; color: #666; }
.c-dis { border-top-color: #aaa; }
.s2a { margin: 0 5px 0 15px; }

.g-ctl { width: 174px; padding: 10px 0 0 2px; }
.ctl-grid { display: grid; grid-template-columns: 34px 46px 46px 31px; grid-auto-rows: 27px; gap: 3px; }
.cb { border: 1px solid #0a3c6e; border-radius: 2px; background: linear-gradient(#fdfdfd, #dcdcdc); display: flex; align-items: center; justify-content: center; }
.cb-off { border-color: #c4c4c4; background: #efefef; }
.cb-red { border-color: #e01010; }
.cico { width: 30px; height: 20px; display: block; }
.cb-red .cico { width: 36px; height: 22px; }
.cico.auto { width: 24px; height: 24px; }
.auto-t { font: bold 6.500px "Liberation Mono", monospace; text-anchor: middle; fill: #000; }
.auto-v { font-size: 9px; font-weight: bold; text-anchor: middle; }
.cb-run { grid-column: 1 / 3; height: 28px; justify-content: flex-start; padding-left: 9px; font-size: 12px; }
.cb-run b { margin-left: 17px; letter-spacing: .2px; }
.run-tri { width: 13px; height: 19px; }
.cb-time { height: 28px; color: #0a7a0a; font-size: 13px; letter-spacing: .3px; border-radius: 3px; background: #f2f2f2; border-color: #0a5a9e; }
.ctl-grid > .cb:last-child { height: 28px; }

.g-tim { width: 67px; padding: 10px 0 0 7px; }
.tim-col { display: flex; flex-direction: column; gap: 3px; width: 48px; }
.cb-tim { height: 27px; gap: 1px; border-color: #555; justify-content: flex-start; padding-left: 5px; }
.cb-tim:last-child { height: 28px; }
.tim-ico { width: 26px; height: 26px; display: block; overflow: visible; }

.status { height: 19px; display: flex; padding-top: 2px; background: #efefef; }
.st { height: 17px; border-top: 1px solid #aaa; border-left: 1px solid #aaa; line-height: 15px; padding-left: 3px; font-size: 11px; letter-spacing: -.1px; flex: none; }
.st1 { width: 189px; }
.st2 { width: 1127px; margin-left: 3px; }
.st3 { width: 47px; font-size: 12px; letter-spacing: 0; }
```
